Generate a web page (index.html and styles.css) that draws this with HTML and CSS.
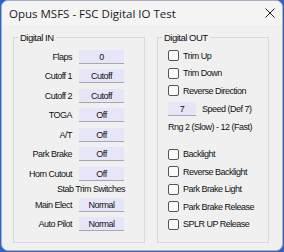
FILE: index.html
```html
<!DOCTYPE html>
<html lang="en">
  <head>
    <meta charset="UTF-8" />
    <title>Opus MSFS - FSC Digital IO Test</title>
    <link rel="stylesheet" href="styles.css">
  </head>
  <body>
    <div class="window">
      <div class="titlebar">
        <span class="title">Opus MSFS - FSC Digital IO Test</span>
        <svg class="close" width="10" height="10" viewBox="0 0 10 10">
          <path d="M0.5 0.5 L9.5 9.5 M9.5 0.5 L0.5 9.5" stroke="#222" stroke-width="1" fill="none" />
        </svg>
      </div>

      <div class="content">
        <fieldset class="group group-in">
          <legend>Digital IN</legend>
          <div class="row"><span class="lbl">Flaps</span><span class="field">0</span></div>
          <div class="row"><span class="lbl">Cutoff 1</span><span class="field">Cutoff</span></div>
          <div class="row"><span class="lbl">Cutoff 2</span><span class="field">Cutoff</span></div>
          <div class="row"><span class="lbl">TOGA</span><span class="field">Off</span></div>
          <div class="row"><span class="lbl">A/T</span><span class="field">Off</span></div>
          <div class="row"><span class="lbl">Park Brake</span><span class="field">Off</span></div>
          <div class="row"><span class="lbl">Horn Cutout</span><span class="field">Off</span></div>
          <div class="subhead">Stab Trim Switches</div>
          <div class="row"><span class="lbl">Main Elect</span><span class="field">Normal</span></div>
          <div class="row"><span class="lbl">Auto Pilot</span><span class="field">Normal</span></div>
        </fieldset>

        <fieldset class="group group-out">
          <legend>Digital OUT</legend>
          <label class="check"><span class="box"></span>Trim Up</label>
          <label class="check"><span class="box"></span>Trim Down</label>
          <label class="check"><span class="box"></span>Reverse Direction</label>
          <div class="speed"><span class="field small">7</span>Speed (Def 7)</div>
          <div class="range">Rng 2 (Slow) - 12 (Fast)</div>
          <div class="spacer"></div>
          <label class="check"><span class="box"></span>Backlight</label>
          <label class="check"><span class="box"></span>Reverse Backlight</label>
          <label class="check"><span class="box"></span>Park Brake Light</label>
          <label class="check"><span class="box"></span>Park Brake Release</label>
          <label class="check"><span class="box"></span>SPLR UP Release</label>
        </fieldset>
      </div>
    </div>
  </body>
</html>
```

FILE: styles.css
```css
html,
body {
  margin: 0;
  padding: 0;
}
body {
  width: 284px;
  height: 252px;
  background: #2f63c4;
  overflow: hidden;
  font-family: "Liberation Sans", Arial, sans-serif;
  font-size: 9px;
  letter-spacing: -0.5px;
  color: #111;
}
.window {
  box-sizing: border-box;
  margin-left: 1px;
  width: 282px;
  height: 251px;
  background: #f0f0f0;
  border: 1px solid #a9b2c2;
  border-radius: 7px;
  overflow: hidden;
}
.titlebar {
  height: 24px;
  display: flex;
  align-items: center;
  justify-content: space-between;
  padding: 0 6px 0 7px;
  background: #f4f4f4;
}
.title {
  font-family: "Open Sans", "Noto Sans", sans-serif;
  font-size: 11.5px;
  letter-spacing: 0;
  color: #1a1a1a;
}
.close {
  display: block;
  margin-right: 1px;
}
.content {
  display: flex;
  gap: 12px;
  padding: 6px 0 0 11px;
}
.group {
  margin: 0;
  padding: 0;
  border: 1px solid #d9d9d9;
  border-radius: 0;
  min-width: 0;
  box-sizing: border-box;
  height: 212px;
}
.group legend {
  padding: 0 2px;
  margin-left: 4px;
  line-height: 13px;
  font-size: 9.5px;
}
.group-in {
  width: 132px;
}
.group-out {
  width: 112px;
}
.group-in .row:first-of-type {
  margin-top: 3px;
}
.row {
  display: flex;
  align-items: center;
  height: 19.5px;
}
.lbl {
  flex-shrink: 0;
  width: 58px;
  text-align: right;
  margin-right: 7px;
}
.field {
  flex-shrink: 0;
  display: block;
  width: 45px;
  height: 14px;
  line-height: 14px;
  box-sizing: border-box;
  text-align: center;
  background: #e6e6f8;
  border-bottom: 1px solid #a8a8a8;
}
.subhead {
  height: 12.5px;
  line-height: 12px;
  margin-top: -1px;
  text-align: right;
  width: 111px;
}
.group-out .check:first-of-type {
  margin-top: 3px;
}
.check {
  display: flex;
  align-items: center;
  height: 17.5px;
  padding-left: 10px;
  white-space: nowrap;
}
.box {
  flex-shrink: 0;
  width: 11px;
  height: 11px;
  box-sizing: border-box;
  border: 1px solid #555;
  border-radius: 2px;
  background: #fbfbfb;
  margin-right: 4px;
}
.speed {
  display: flex;
  align-items: center;
  height: 19px;
  padding-left: 10px;
  white-space: nowrap;
}
.field.small {
  width: 28px;
  margin-right: 6px;
}
.range {
  padding-left: 10px;
  height: 17px;
  line-height: 17px;
  white-space: nowrap;
}
.spacer {
  height: 10px;
}
```
